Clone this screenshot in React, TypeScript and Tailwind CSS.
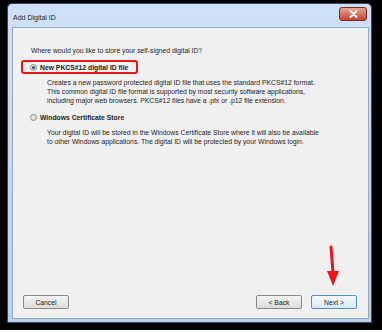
import React from 'react';

function Radio({ checked }: { checked?: boolean }) {
  return (
    <span className="w-[7px] h-[7px] rounded-full border border-[#8c8c8c] bg-gradient-to-br from-[#f4f4f4] to-[#cfcfcf] flex items-center justify-center shrink-0">
      {checked && <span className="w-[3px] h-[3px] rounded-full bg-[#2a4a6c]" />}
    </span>
  );
}

function Button({ label, isDefault }: { label: string; isDefault?: boolean }) {
  return (
    <div
      className={`w-[46px] h-[14px] rounded-[2px] border flex items-center justify-center text-[6.8px] text-[#1a1a1a] ${
        isDefault
          ? 'border-[#4f94c6] bg-gradient-to-b from-[#f4f9fd] to-[#dbe9f4]'
          : 'border-[#8a8a8a] bg-gradient-to-b from-[#f4f4f4] to-[#dcdcdc]'
      }`}
    >
      {label}
    </div>
  );
}

export default function App() {
  return (
    <div className="w-[382px] h-[332px] bg-white font-['Liberation_Sans',Arial,sans-serif]">
      <div className="h-[330px] bg-black pt-[3px] pl-[7px] pr-[10px] pb-[7px]">
        <div className="h-full flex flex-col rounded-t-[5px] border border-[#3d4b5c] bg-gradient-to-b from-[#cde0f5] to-[#b9d1ec]">
          {/* Title bar */}
          <div className="h-[23px] flex items-start justify-between pl-[5px] pr-[4px]">
            <span className="mt-[9px] text-[7px] leading-[9px] text-[#1e1e1e]">Add Digital ID</span>
            <div className="mt-[3px] w-[28px] h-[14px] rounded-[3px] border border-[#7a2b22] bg-gradient-to-b from-[#e8a394] to-[#c2412b] flex items-center justify-center">
              <svg width="9" height="8" viewBox="0 0 9 8">
                <path d="M1.5 1 L7.5 7 M7.5 1 L1.5 7" stroke="white" strokeWidth="1.8" strokeLinecap="round" />
              </svg>
            </div>
          </div>

          {/* Client area */}
          <div className="relative flex-1 ml-[4px] mr-[2px] mb-[3px] border border-[#93abc8] bg-[#f0f0f0] flex flex-col text-[6.8px] leading-[9px] text-[#1e1e1e]">
            <div className="pl-[8px] pt-[18px] flex flex-col items-start">
              <p className="pl-[10px] whitespace-nowrap">Where would you like to store your self-signed digital ID?</p>

              <div className="mt-[5px] w-[117px] h-[14px] rounded-[3px] border-2 border-[#e8141b] flex items-center gap-[3px] pl-[7px]">
                <Radio checked />
                <span className="font-bold whitespace-nowrap">New PKCS#12 digital ID file</span>
              </div>

              <div className="mt-[4px] ml-[26px] whitespace-nowrap">
                <p>Creates a new password protected digital ID file that uses the standard PKCS#12 format.</p>
                <p>This common digital ID file format is supported by most security software applications,</p>
                <p>including major web browsers. PKCS#12 files have a .pfx or .p12 file extension.</p>
              </div>

              <div className="mt-[8px] pl-[9px] flex items-center gap-[3px]">
                <Radio />
                <span className="font-bold whitespace-nowrap">Windows Certificate Store</span>
              </div>

              <div className="mt-[6px] ml-[26px] whitespace-nowrap">
                <p>Your digital ID will be stored in the Windows Certificate Store where it will also be available</p>
                <p>to other Windows applications. The digital ID will be protected by your Windows login.</p>
              </div>
            </div>

            <div className="flex-1" />

            <div className="flex items-center justify-between pl-[10px] pr-[11px] pb-[9px]">
              <Button label="Cancel" />
              <div className="flex gap-[9px]">
                <Button label="< Back" />
                <Button label="Next >" isDefault />
              </div>
            </div>

            {/* red pointer arrow */}
            <svg className="absolute left-[313px] top-[217px]" width="16" height="44" viewBox="0 0 16 44">
              <path d="M5 2 L7 28" stroke="#e8141b" strokeWidth="3" strokeLinecap="round" />
              <polygon points="1,26 13,26 7,41" fill="#e8141b" />
            </svg>
          </div>
        </div>
      </div>
    </div>
  );
}
